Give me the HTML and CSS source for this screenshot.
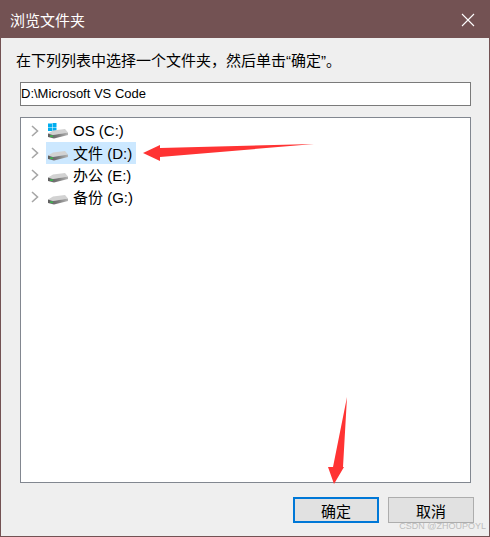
FILE: index.html
```html
<!DOCTYPE html>
<html lang="zh-CN">
<head>
<meta charset="UTF-8" />
<title>浏览文件夹</title>
<link rel="stylesheet" href="styles.css">
</head>
<body>

<svg class="defs" width="0" height="0">
  <defs>
    <linearGradient id="front" x1="0" x2="1" y1="0" y2="0">
      <stop offset="0" stop-color="#5f5f5f"/>
      <stop offset="0.5" stop-color="#7a7a7a"/>
      <stop offset="1" stop-color="#b4b4b4"/>
    </linearGradient>
    <symbol id="disk" viewBox="0 0 22 18">
      <path d="M7 8.500L19 7L22 10.500L7 13L2 11.500Z" fill="#d2d2d2"/>
      <path d="M2 11.500L7 13L22 10.500L22 13L8 16.500L2 15Z" fill="url(#front)"/>
      <rect x="4" y="13.500" width="3" height="1.300" fill="#35c24a"/>
    </symbol>
  </defs>
</svg>

<div class="dialog">
  <div class="titlebar">
    <span class="title">浏览文件夹</span>
    <svg class="close" width="14" height="14" viewBox="0 0 14 14"><path d="M1 1L13 13M13 1L1 13" stroke="#fff" stroke-width="1.100" fill="none"/></svg>
  </div>

  <div class="content">
    <p class="prompt">在下列列表中选择一个文件夹，然后单击“确定”。</p>
    <div class="path">D:\Microsoft VS Code</div>

    <div class="tree">
      <div class="row">
        <svg class="chevron" width="8" height="12" viewBox="0 0 8 12"><path d="M1 1L6.500 6L1 11" stroke="#a6a6a6" stroke-width="1.600" fill="none"/></svg>
        <span class="node">
          <svg class="drive" width="22" height="18" viewBox="0 0 22 18">
            <rect x="2" y="1.500" width="4" height="3.500" fill="#00adef"/><rect x="6.500" y="1" width="4" height="4" fill="#00adef"/>
            <rect x="2" y="5.500" width="4" height="3.500" fill="#00adef"/><rect x="6.500" y="5.500" width="4" height="4" fill="#00adef"/>
            <use href="#disk"/>
          </svg>
          <span class="label">OS (C:)</span>
        </span>
      </div>
      <div class="row">
        <svg class="chevron" width="8" height="12" viewBox="0 0 8 12"><path d="M1 1L6.500 6L1 11" stroke="#a6a6a6" stroke-width="1.600" fill="none"/></svg>
        <span class="node selected">
          <svg class="drive" width="22" height="18" viewBox="0 0 22 18"><use href="#disk"/></svg>
          <span class="label">文件 (D:)</span>
        </span>
      </div>
      <div class="row">
        <svg class="chevron" width="8" height="12" viewBox="0 0 8 12"><path d="M1 1L6.500 6L1 11" stroke="#a6a6a6" stroke-width="1.600" fill="none"/></svg>
        <span class="node">
          <svg class="drive" width="22" height="18" viewBox="0 0 22 18"><use href="#disk"/></svg>
          <span class="label">办公 (E:)</span>
        </span>
      </div>
      <div class="row">
        <svg class="chevron" width="8" height="12" viewBox="0 0 8 12"><path d="M1 1L6.500 6L1 11" stroke="#a6a6a6" stroke-width="1.600" fill="none"/></svg>
        <span class="node">
          <svg class="drive" width="22" height="18" viewBox="0 0 22 18"><use href="#disk"/></svg>
          <span class="label">备份 (G:)</span>
        </span>
      </div>
    </div>

    <div class="actions">
      <button class="primary">确定</button>
      <button>取消</button>
    </div>
  </div>

  <!-- red annotation arrows drawn over the screenshot -->
  <svg class="arrows" width="490" height="537" viewBox="0 0 490 537">
    <path d="M143 153L160 145L160 148L314 144L160 157L160 161Z" fill="#ff3333"/>
    <path d="M347 397L343 467L344 467L334 484L328 467L333 467Z" fill="#ff3333"/>
  </svg>

  <span class="watermark">CSDN @ZHOUPOYL</span>
</div>

</body>
</html>
```

FILE: styles.css
```css
* {
  box-sizing: border-box;
}
html, body {
  margin: 0;
  padding: 0;
}
body {
  width: 490px;
  height: 537px;
  overflow: hidden;
  font-family: "Liberation Sans", "Noto Sans CJK SC", sans-serif;
  font-size: 15px;
  color: #000;
}
.defs {
  position: absolute;
}
.dialog {
  position: relative;
  width: 490px;
  height: 537px;
  display: flex;
  flex-direction: column;
  background: #efefef;
  border: 1px solid #735253;
}
.titlebar {
  height: 37px;
  flex: none;
  display: flex;
  align-items: center;
  justify-content: space-between;
  padding: 0 14px 0 9px;
  background: #735253;
  color: #fff;
}
.content {
  flex: 1;
  display: flex;
  flex-direction: column;
  padding: 13px 15px 0 19px;
}
.prompt {
  margin: 0 0 0 -4px;
  height: 19px;
  line-height: 19px;
  white-space: nowrap;
}
.path {
  height: 24px;
  width: 451px;
  margin-top: 12px;
  line-height: 22px;
  font-size: 13px;
  background: #fff;
  border: 1px solid #7a7a7a;
}
.tree {
  height: 366px;
  width: 451px;
  margin-top: 11px;
  padding-top: 2px;
  background: #fff;
  border: 1px solid #828790;
}
.row {
  display: flex;
  align-items: center;
  height: 22px;
  padding-left: 10px;
}
.chevron {
  margin-right: 7px;
}
.node {
  display: flex;
  align-items: center;
  gap: 5px;
  height: 22px;
  width: 90px;
}
.node.selected {
  background: #cce8ff;
}
.label {
  margin-top: -2px;
}
.actions {
  display: flex;
  gap: 9px;
  margin-top: 14px;
  margin-left: 273px;
}
button {
  width: 86px;
  height: 26px;
  padding: 0;
  font: inherit;
  background: #e1e1e1;
  border: 1px solid #adadad;
}
button.primary {
  border: 2px solid #0078d7;
}
.arrows {
  position: absolute;
  left: -1px;
  top: -1px;
}
.watermark {
  position: absolute;
  right: 3px;
  bottom: 5px;
  font-size: 9px;
  color: #bdbdbd;
}
```
